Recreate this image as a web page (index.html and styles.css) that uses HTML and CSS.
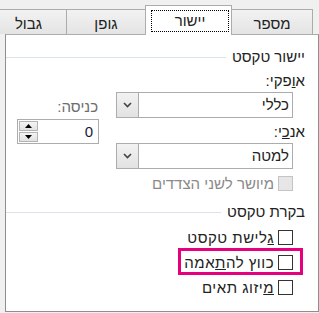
FILE: index.html
```html
<!DOCTYPE html>
<html lang="he" dir="rtl">
<head>
    <meta charset="UTF-8">
    <title>עיצוב תאים - יישור</title>
    <link rel="stylesheet" href="styles.css">
</head>
<body>
    <div class="dialog">
        <div class="tabs">
            <div class="tab">מספר</div>
            <div class="tab active"><span class="focus">יישור</span></div>
            <div class="tab">גופן</div>
            <div class="tab">גבול</div>
        </div>
        <div class="panel">
            <div class="group-title"><span>יישור טקסט</span></div>
            <div class="align-body">
                <div class="align-main">
                    <div class="label">א<u>ו</u>פקי:</div>
                    <div class="combo">
                        <span class="combo-value">כללי</span>
                        <span class="combo-btn"><svg width="9" height="6" viewBox="0 0 9 6"><polyline points="1,1 4.5,4.5 8,1" fill="none" stroke="#444" stroke-width="1.6"/></svg></span>
                    </div>
                    <div class="label">אנ<u>כ</u>י:</div>
                    <div class="combo">
                        <span class="combo-value">למטה</span>
                        <span class="combo-btn"><svg width="9" height="6" viewBox="0 0 9 6"><polyline points="1,1 4.5,4.5 8,1" fill="none" stroke="#444" stroke-width="1.6"/></svg></span>
                    </div>
                    <div class="check disabled"><span class="box"></span>מיושר לשני הצדדים</div>
                </div>
                <div class="indent">
                    <div class="label muted">כניסה:</div>
                    <div class="spin">
                        <span class="spin-value">0</span>
                        <span class="spin-btns">
                            <span class="spin-btn"><svg width="7" height="4" viewBox="0 0 7 4"><polygon points="0,4 3.5,0 7,4" fill="#000"/></svg></span>
                            <span class="spin-btn"><svg width="7" height="4" viewBox="0 0 7 4"><polygon points="0,0 3.5,4 7,0" fill="#000"/></svg></span>
                        </span>
                    </div>
                </div>
            </div>
            <div class="group-title second"><span>בקרת טקסט</span></div>
            <div class="checks">
                <div class="check"><span class="box"></span><span><u>ג</u>לישת טקסט</span></div>
                <div class="check highlight"><span class="box"></span><span>כווץ לה<u>ת</u>אמה</span></div>
                <div class="check"><span class="box"></span><span><u>מ</u>יזוג תאים</span></div>
            </div>
        </div>
    </div>
</body>
</html>
```

FILE: styles.css
```css
/* Base */
body {
    margin: 0;
    font-family: "Liberation Sans", "DejaVu Sans", sans-serif;
    font-size: 15px;
    color: #222;
    background-color: #f0f0f0;
}

.dialog {
    width: 319px;
    height: 313px;
    overflow: hidden;
    background-color: #f0f0f0;
}

/* Tabs */
.tabs {
    display: flex;
    align-items: flex-end;
    height: 34px;
    padding-right: 6px;
}

.tab {
    flex: none;
    box-sizing: border-box;
    height: 25px;
    padding-top: 5px;
    line-height: 17px;
    text-align: center;
    border: 1px solid #acacac;
    border-bottom: none;
    margin-left: -1px;
    background: linear-gradient(#f2f2f2, #e4e4e4);
}

.tab:nth-child(1) { width: 82px; }
.tab:nth-child(2) { width: 87px; }
.tab:nth-child(3) { width: 80px; }
.tab:nth-child(4) { width: 77px; }

.tab.active {
    position: relative;
    z-index: 2;
    height: 30px;
    margin-bottom: -1px;
    padding: 4px 2px 0 5px;
    background: #fff;
}

.focus {
    display: block;
    box-sizing: border-box;
    height: 22px;
    padding-top: 1px;
    border: 1px dotted #000;
}

/* Panel */
.panel {
    box-sizing: border-box;
    width: 314px;
    height: 278px;
    padding: 14px 13px 0 0;
    background-color: #fff;
    border: 1px solid #8f8f8f;
    border-top-color: #acacac;
}

.group-title {
    display: flex;
    align-items: center;
    gap: 6px;
    height: 16px;
    line-height: 16px;
}

.group-title::after {
    content: "";
    flex: 1;
    height: 1px;
    background-color: #dbe3ea;
}

.group-title.second {
    margin-top: 13px;
}

.align-body {
    display: flex;
    gap: 17px;
}

.align-main {
    width: 189px;
}

.label {
    height: 16px;
    line-height: 16px;
    margin-top: 8px;
}

.combo + .label {
    margin-top: 6px;
}

.muted {
    color: #6d6d6d;
}

.combo {
    display: flex;
    box-sizing: border-box;
    width: 177px;
    height: 26px;
    margin: 3px 12px 0 0;
    border: 1px solid #acacac;
}

.combo-value {
    flex: 1;
    padding-right: 3px;
    line-height: 24px;
}

.combo-btn {
    display: flex;
    align-items: center;
    justify-content: center;
    width: 21px;
    border-right: 1px solid #acacac;
    background: linear-gradient(#f2f2f2, #e2e2e2);
}

/* Indent spinner */
.indent {
    width: 82px;
    padding-top: 26px;
}

.indent .label {
    text-align: right;
    padding-right: 1px;
}

.spin {
    display: flex;
    box-sizing: border-box;
    height: 25px;
    margin-top: 4px;
    border: 1px solid #acacac;
}

.spin-value {
    flex: 1;
    padding-right: 5px;
    line-height: 23px;
    color: #1a1a40;
}

.spin-btns {
    display: flex;
    flex-direction: column;
    gap: 1px;
    padding: 1px;
    width: 19px;
}

.spin-btn {
    flex: 1;
    display: flex;
    align-items: center;
    justify-content: center;
    border: 1px solid #b4b4b4;
    background: linear-gradient(#f4f4f4, #e2e2e2);
}

/* Checkboxes */
.check {
    display: flex;
    align-items: center;
    gap: 4px;
    width: fit-content;
    height: 15px;
    line-height: 15px;
    margin-right: 12px;
}

.check.disabled {
    margin-top: 7px;
    color: #8a8a8a;
}

.box {
    box-sizing: border-box;
    width: 15px;
    height: 15px;
    border: 1px solid #333;
    background-color: #fff;
}

.disabled .box {
    border-color: #c4c4c4;
    background-color: #e6e6e6;
}

.checks {
    display: flex;
    flex-direction: column;
    gap: 10px;
    margin-top: 10px;
    letter-spacing: 0.5px;
}

.highlight {
    position: relative;
}

.highlight::after {
    content: "";
    position: absolute;
    top: -7px;
    bottom: -5px;
    right: -10px;
    left: -6px;
    border: 3px solid #e5007d;
}
```
